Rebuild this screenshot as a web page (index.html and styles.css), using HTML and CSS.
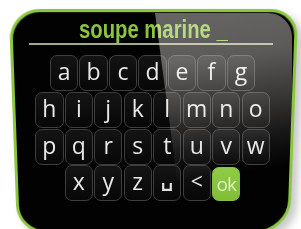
FILE: index.html
```html
<!DOCTYPE html>
<html>
<head>
<meta charset="utf-8">
<link rel="stylesheet" href="styles.css">
</head>
<body>
<div class="device">
  <div class="title"><span class="title-text">soupe marine _</span></div>
  <div class="keyboard">
    <div class="row">
      <div class="key">a</div><div class="key">b</div><div class="key">c</div><div class="key">d</div><div class="key">e</div><div class="key">f</div><div class="key">g</div>
    </div>
    <div class="row">
      <div class="key">h</div><div class="key">i</div><div class="key">j</div><div class="key">k</div><div class="key">l</div><div class="key">m</div><div class="key">n</div><div class="key">o</div>
    </div>
    <div class="row">
      <div class="key">p</div><div class="key">q</div><div class="key">r</div><div class="key">s</div><div class="key">t</div><div class="key">u</div><div class="key">v</div><div class="key">w</div>
    </div>
    <div class="row">
      <div class="key">x</div><div class="key">y</div><div class="key">z</div>
      <div class="key key-space"><svg class="space-icon" width="10" height="8" viewBox="0 0 10 8"><path d="M1.2 0 V6.8 H8.8 V0" fill="none" stroke="#e2e2e2" stroke-width="2.2"/></svg></div>
      <div class="key key-back">&lt;</div>
      <div class="key key-ok">ok</div>
    </div>
  </div>
  <div class="gloss"></div>
</div>
</body>
</html>
```
FILE: styles.css
```css
html, body {
  margin: 0;
  padding: 0;
  background: #ffffff;
  overflow: hidden;
}

.device {
  position: relative;
  isolation: isolate;
  width: 289px;
  height: 222px;
  margin: 9px 0 0 8px;
  padding-top: 7px;
  box-sizing: border-box;
}

.device::before {
  content: "";
  position: absolute;
  top: 2px;
  bottom: -7px;
  left: 4.5px;
  right: 4px;
  z-index: -1;
  background: #020202;
  border: 3px solid #8cc63f;
  border-radius: 30px 26px 36px 30px;
  transform: perspective(600px) rotateX(-9deg);
  box-shadow: 6px 5px 9px rgba(0, 0, 0, 0.22);
}

.title {
  margin: 0 24px 0 21px;
  border-bottom: 2px solid #a2ab86;
  text-align: center;
  height: 27px;
  line-height: 27px;
}

.title-text {
  display: inline-block;
  font-family: "Liberation Sans", sans-serif;
  font-weight: bold;
  font-size: 26px;
  color: #8cc43f;
  white-space: pre;
  transform: scaleX(0.78);
  margin-left: 4px;
}

.keyboard {
  margin-top: 10px;
  display: flex;
  flex-direction: column;
  align-items: center;
  gap: 0.8px;
}

.row {
  display: flex;
  gap: 1.1px;
}

.key {
  width: 28.4px;
  height: 36px;
  box-sizing: border-box;
  border: 1px solid #3e3e3e;
  border-radius: 7px;
  background: linear-gradient(#141414, #070707);
  color: #e8e8e8;
  font-family: "Open Sans", sans-serif;
  font-size: 23px;
  line-height: 31px;
  text-align: center;
}

.key-space {
  display: flex;
  align-items: flex-start;
  justify-content: center;
  padding-top: 17px;
}

.key-back {
  font-size: 21px;
}

.key-ok {
  background: linear-gradient(#8fcb45, #82bd3a);
  border-color: #86c23f;
  color: #dcf1bf;
  font-size: 19px;
  line-height: 32px;
  letter-spacing: -1px;
  margin-top: 2px;
  height: 34px;
}

.gloss {
  position: absolute;
  top: 4px;
  left: 4px;
  right: 5px;
  bottom: 0;
  border-radius: 27px 24px 33px 27px;
  clip-path: polygon(143px 0, 100% 0, 100% 100%, 172px 100%);
  background:
    linear-gradient(to right, rgba(255, 255, 255, 0.10), rgba(255, 255, 255, 0) 30%),
    linear-gradient(172deg, rgba(255, 250, 244, 0.42) 0%, rgba(255, 250, 244, 0.36) 28%, rgba(255, 250, 244, 0.22) 46%, rgba(255, 250, 244, 0.08) 62%, rgba(255, 250, 244, 0) 75%);
  pointer-events: none;
}
```
